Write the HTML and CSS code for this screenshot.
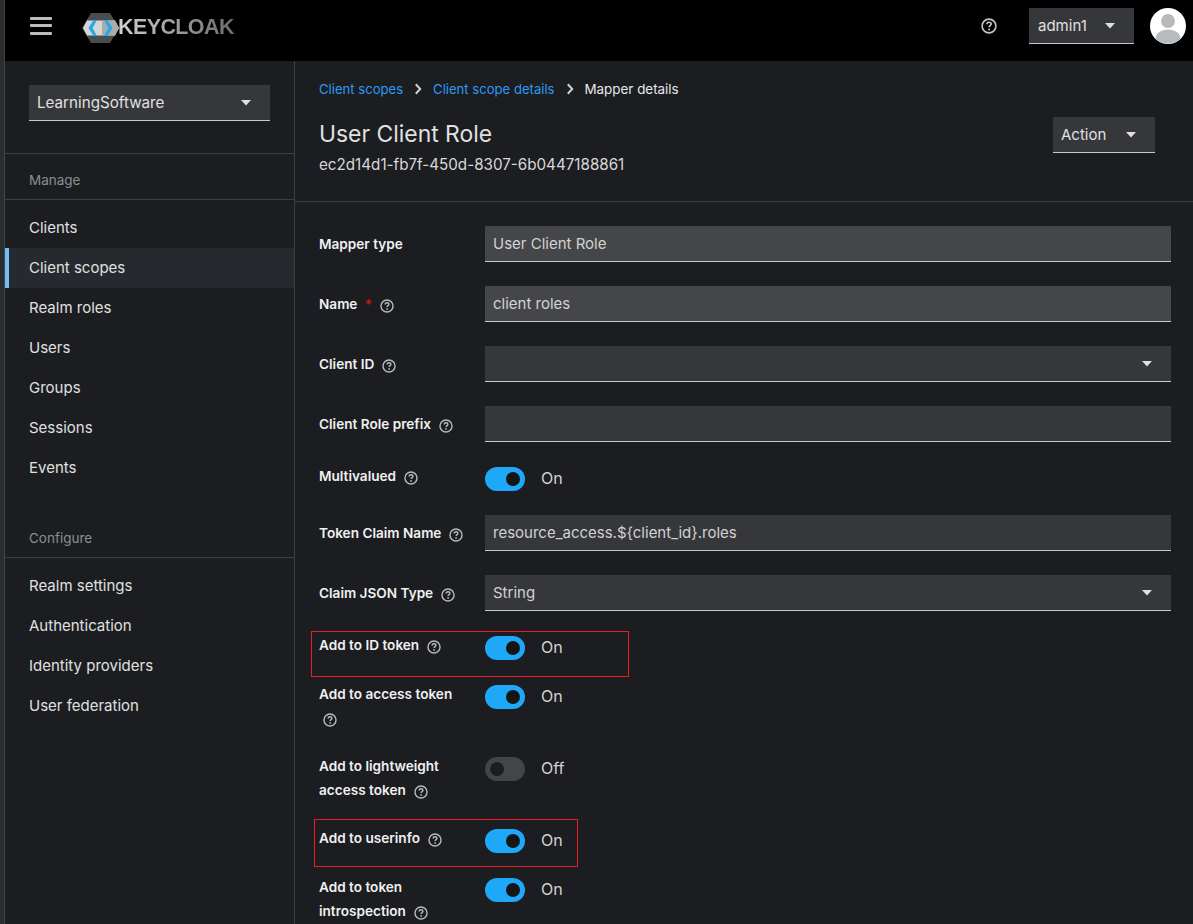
FILE: index.html
```html
<!DOCTYPE html>
<html lang="en">
<head>
<meta charset="utf-8">
<title>Keycloak - Mapper details</title>
<link rel="stylesheet" href="styles.css">
</head>
<body>
<svg class="defs" width="0" height="0" aria-hidden="true">
  <symbol id="help" viewBox="0 0 16 16">
    <circle cx="8" cy="8" r="6.9" fill="none" stroke="currentColor" stroke-width="1.6"/>
    <path d="M5.9 6.3C5.900 5 6.900 4.200 8.100 4.200S10.200 5 10.200 6.100C10.200 7.500 8.100 7.600 8.100 9.200" fill="none" stroke="currentColor" stroke-width="1.6"/>
    <circle cx="8.1" cy="11.4" r="1" fill="currentColor"/>
  </symbol>
  <symbol id="caret" viewBox="0 0 10 6">
    <path d="M0 0H10L5 5.6Z" fill="currentColor"/>
  </symbol>
  <symbol id="chev" viewBox="0 0 8 12">
    <path d="M1.8 1.2L6.2 6L1.8 10.8" fill="none" stroke="currentColor" stroke-width="2"/>
  </symbol>
</svg>
<div class="page">
  <div class="strip"></div>
  <div class="app">
    <header class="masthead">
      <button class="burger" type="button" aria-label="Menu"><span></span><span></span><span></span></button>
      <div class="logo">
        <svg class="logo-mark" viewBox="0 0 38 32" width="38" height="32" aria-hidden="true">
          <path d="M9 1H28L37 16L28 31H9L0 16Z" fill="#4a4d50"/>
          <path d="M5 8.500H33L37 16L33 23.500H5L1 16Z" fill="#d4d5d6"/>
          <path d="M20 8.500H33L37 16L33 23.500H20Z" fill="#a9abad"/>
          <path d="M11.500 8L6.500 16L11.500 24H15L10.500 16L15 8Z" fill="#25a9e4"/>
          <path d="M22 8H25.500L30.500 16L25.500 24H22L26.500 16Z" fill="#25a9e4"/>
        </svg>
        <span class="logo-text">KEYCLOAK</span>
      </div>
      <div class="mast-right">
        <svg class="mast-help"><use href="#help"/></svg>
        <div class="select user-select"><span>admin1</span><svg class="caret"><use href="#caret"/></svg></div>
        <svg class="avatar" viewBox="0 0 36 36" width="36" height="36" aria-hidden="true">
          <circle cx="18" cy="18" r="18" fill="#fff"/>
          <circle cx="18" cy="13" r="7" fill="#b8bbbe"/>
          <path d="M5.500 30.500C6 25 11 21.500 18 21.500S30 25 30.500 30.500A18 18 0 0 1 5.500 30.500Z" fill="#b8bbbe"/>
        </svg>
      </div>
    </header>
    <div class="body">
      <aside class="sidebar">
        <div class="realm">
          <div class="select realm-select"><span>LearningSoftware</span><svg class="caret"><use href="#caret"/></svg></div>
        </div>
        <div class="nav-title first">Manage</div>
        <nav class="nav">
          <a class="nav-item">Clients</a>
          <a class="nav-item active">Client scopes</a>
          <a class="nav-item">Realm roles</a>
          <a class="nav-item">Users</a>
          <a class="nav-item">Groups</a>
          <a class="nav-item">Sessions</a>
          <a class="nav-item">Events</a>
        </nav>
        <div class="nav-title second">Configure</div>
        <nav class="nav">
          <a class="nav-item">Realm settings</a>
          <a class="nav-item">Authentication</a>
          <a class="nav-item">Identity providers</a>
          <a class="nav-item">User federation</a>
        </nav>
      </aside>
      <main class="main">
        <section class="page-head">
          <ol class="crumbs">
            <li><a>Client scopes</a></li>
            <li class="sep"><svg class="chev"><use href="#chev"/></svg></li>
            <li><a>Client scope details</a></li>
            <li class="sep"><svg class="chev"><use href="#chev"/></svg></li>
            <li class="current">Mapper details</li>
          </ol>
          <div class="title-row">
            <div>
              <h1 class="title">User Client Role</h1>
              <div class="uuid">ec2d14d1-fb7f-450d-8307-6b0447188861</div>
            </div>
            <div class="select action-select"><span>Action</span><svg class="caret"><use href="#caret"/></svg></div>
          </div>
        </section>
        <form class="form">
          <div class="label">Mapper type</div>
          <div class="field readonly">User Client Role</div>

          <div class="label">Name <span class="req">*</span><svg class="help"><use href="#help"/></svg></div>
          <div class="field readonly">client roles</div>

          <div class="label">Client ID<svg class="help"><use href="#help"/></svg></div>
          <div class="field has-caret"><span></span><svg class="caret"><use href="#caret"/></svg></div>

          <div class="label">Client Role prefix<svg class="help"><use href="#help"/></svg></div>
          <div class="field"></div>

          <div class="label top">Multivalued<svg class="help"><use href="#help"/></svg></div>
          <div class="switch-row"><span class="switch on"></span><span class="switch-text">On</span></div>

          <div class="label">Token Claim Name<svg class="help"><use href="#help"/></svg></div>
          <div class="field">resource_access.${client_id}.roles</div>

          <div class="label">Claim JSON Type<svg class="help"><use href="#help"/></svg></div>
          <div class="field has-caret"><span>String</span><svg class="caret"><use href="#caret"/></svg></div>

          <div class="label top">Add to ID token<svg class="help"><use href="#help"/></svg></div>
          <div class="switch-row"><span class="switch on"></span><span class="switch-text">On</span></div>

          <div class="label top">Add to access token <svg class="help block"><use href="#help"/></svg></div>
          <div class="switch-row"><span class="switch on"></span><span class="switch-text">On</span></div>

          <div class="label top">Add to lightweight access token<svg class="help"><use href="#help"/></svg></div>
          <div class="switch-row"><span class="switch"></span><span class="switch-text">Off</span></div>

          <div class="label top">Add to userinfo<svg class="help"><use href="#help"/></svg></div>
          <div class="switch-row"><span class="switch on"></span><span class="switch-text">On</span></div>

          <div class="label top">Add to token introspection<svg class="help"><use href="#help"/></svg></div>
          <div class="switch-row"><span class="switch on"></span><span class="switch-text">On</span></div>
        </form>
      </main>
    </div>
  </div>
  <div class="annot annot-id"></div>
  <div class="annot annot-userinfo"></div>
</div>
</body>
</html>
```
FILE: styles.css
```css
* { box-sizing: border-box; }
html, body { margin: 0; height: 100%; background: #1b1d21; }
body { font-family: Inter, "Noto Sans", sans-serif; font-size: 15px; color: #e0e0e0; overflow: hidden; }
.defs { position: absolute; }
.page { position: relative; display: flex; width: 1193px; height: 924px; overflow: hidden; }
.strip { width: 5px; flex: none; background: #2b2c2e; border-right: 1px solid #424345; }
.app { flex: 1; display: flex; flex-direction: column; min-width: 0; }

.masthead { height: 61px; flex: none; background: #000; display: flex; align-items: center; padding-left: 25px; }
.burger { width: 22px; height: 18px; padding: 0; border: 0; background: none; display: flex; flex-direction: column; justify-content: space-between; margin-bottom: 10px; }
.burger span { display: block; height: 3px; background: #bcbcbc; border-radius: 1px; }
.logo { display: flex; align-items: center; margin-left: 30px; margin-bottom: 6px; }
.logo-mark { display: block; }
.logo-text { font-family: "Liberation Sans", sans-serif; font-weight: 700; font-size: 21.500px; letter-spacing: -0.6px; margin-left: -2px; background: linear-gradient(90deg, #d0d0d0, #6a6b6d); -webkit-background-clip: text; background-clip: text; color: transparent; }
.mast-right { margin-left: auto; display: flex; align-items: center; padding-right: 7px; margin-bottom: 9px; }
.mast-help { width: 16px; height: 16px; color: #c4c5c6; margin-right: 32px; }
.avatar { margin-left: 16px; display: block; }

.select { display: flex; align-items: center; justify-content: space-between; height: 36px; background: #36373b; border-bottom: 1px solid #c7c7c7; color: #e0e0e0; }
.caret { width: 10px; height: 6px; color: #e0e0e0; flex: none; }
.user-select { width: 105px; padding: 0 19px 0 9px; }
.realm-select { width: 241px; padding: 0 19px 0 8px; font-size: 15.200px; }
.action-select { width: 102px; padding: 0 19px 0 8px; margin-top: -1px; }

.body { flex: 1; display: flex; min-height: 0; }
.sidebar { width: 290px; flex: none; border-right: 1px solid #3c3f42; }
.realm { height: 93px; padding-top: 24px; padding-left: 24px; border-bottom: 1px solid #3c3f42; }
.nav-title { font-size: 13.500px; color: #8a8d90; padding-left: 24px; border-bottom: 1px solid #3c3f42; }
.nav-title.first { height: 46px; line-height: 53px; }
.nav-title.second { height: 70px; line-height: 30px; padding-top: 35px; }
.nav { display: flex; flex-direction: column; padding-top: 8px; }
.nav-item { height: 40px; line-height: 40px; padding-left: 24px; color: #e0e0e0; }
.nav-item.active { background: #26292d; box-shadow: inset 4px 0 0 #73bcf7; }

.main { flex: 1; min-width: 0; }
.page-head { height: 141px; padding: 17px 38px 0 24px; border-bottom: 1px solid #3c3f42; }
.crumbs { list-style: none; margin: 0; padding: 0; display: flex; align-items: center; height: 21px; font-size: 13.100px; }
.crumbs a { color: #2b9af3; }
.crumbs .current { color: #e8e8e8; font-size: 13.400px; }
.crumbs .sep { width: 30px; display: flex; justify-content: center; color: #d2d2d2; }
.chev { width: 8px; height: 12px; }
.title-row { display: flex; justify-content: space-between; align-items: flex-start; margin-top: 19px; }
.title { margin: 0; font-size: 22.900px; font-weight: 400; line-height: 32px; color: #e0e0e0; }
.uuid { font-size: 15.200px; line-height: 24px; margin-top: 3px; color: #d8d8d8; }

.form { display: grid; grid-template-columns: 166px 686px; row-gap: 24px; padding: 24px 0 0 24px; }
.label { font-size: 13.600px; font-weight: 600; line-height: 24px; color: #f0f0f0; padding-top: 6px; }
.label.top { padding-top: 0; padding-bottom: 2px; margin-top: -2px; padding-right: 10px; }
.req { color: #c9190b; margin-left: 4px; }
.help { width: 14px; height: 14px; color: #b8bbbe; margin-left: 8px; vertical-align: -4px; }
.help.block { display: block; margin: 7px 0 3px 4px; }
.field { height: 36px; padding: 0 8px; line-height: 35px; background: #36373b; border-bottom: 1px solid #c7c7c7; color: #d2d2d2; }
.field.readonly { background: #45464a; }
.has-caret { display: flex; align-items: center; justify-content: space-between; padding-right: 19px; }
.switch-row { display: flex; align-items: flex-start; padding-top: 1px; height: 25px; }
.switch { position: relative; width: 40px; height: 24px; border-radius: 12px; background: #444548; flex: none; }
.switch::after { content: ""; position: absolute; left: 5px; top: 5px; width: 14px; height: 14px; border-radius: 50%; background: #1b1d21; }
.switch.on { background: #1fa7f8; }
.switch.on::after { left: 21px; background: #151515; }
.switch-text { margin-left: 16px; line-height: 22px; font-size: 16px; color: #d2d2d2; }

.annot { position: absolute; border: 1px solid #ed1c24; pointer-events: none; }
.annot-id { left: 311px; top: 631px; width: 318px; height: 46px; }
.annot-userinfo { left: 314px; top: 819px; width: 264px; height: 48px; }
```
